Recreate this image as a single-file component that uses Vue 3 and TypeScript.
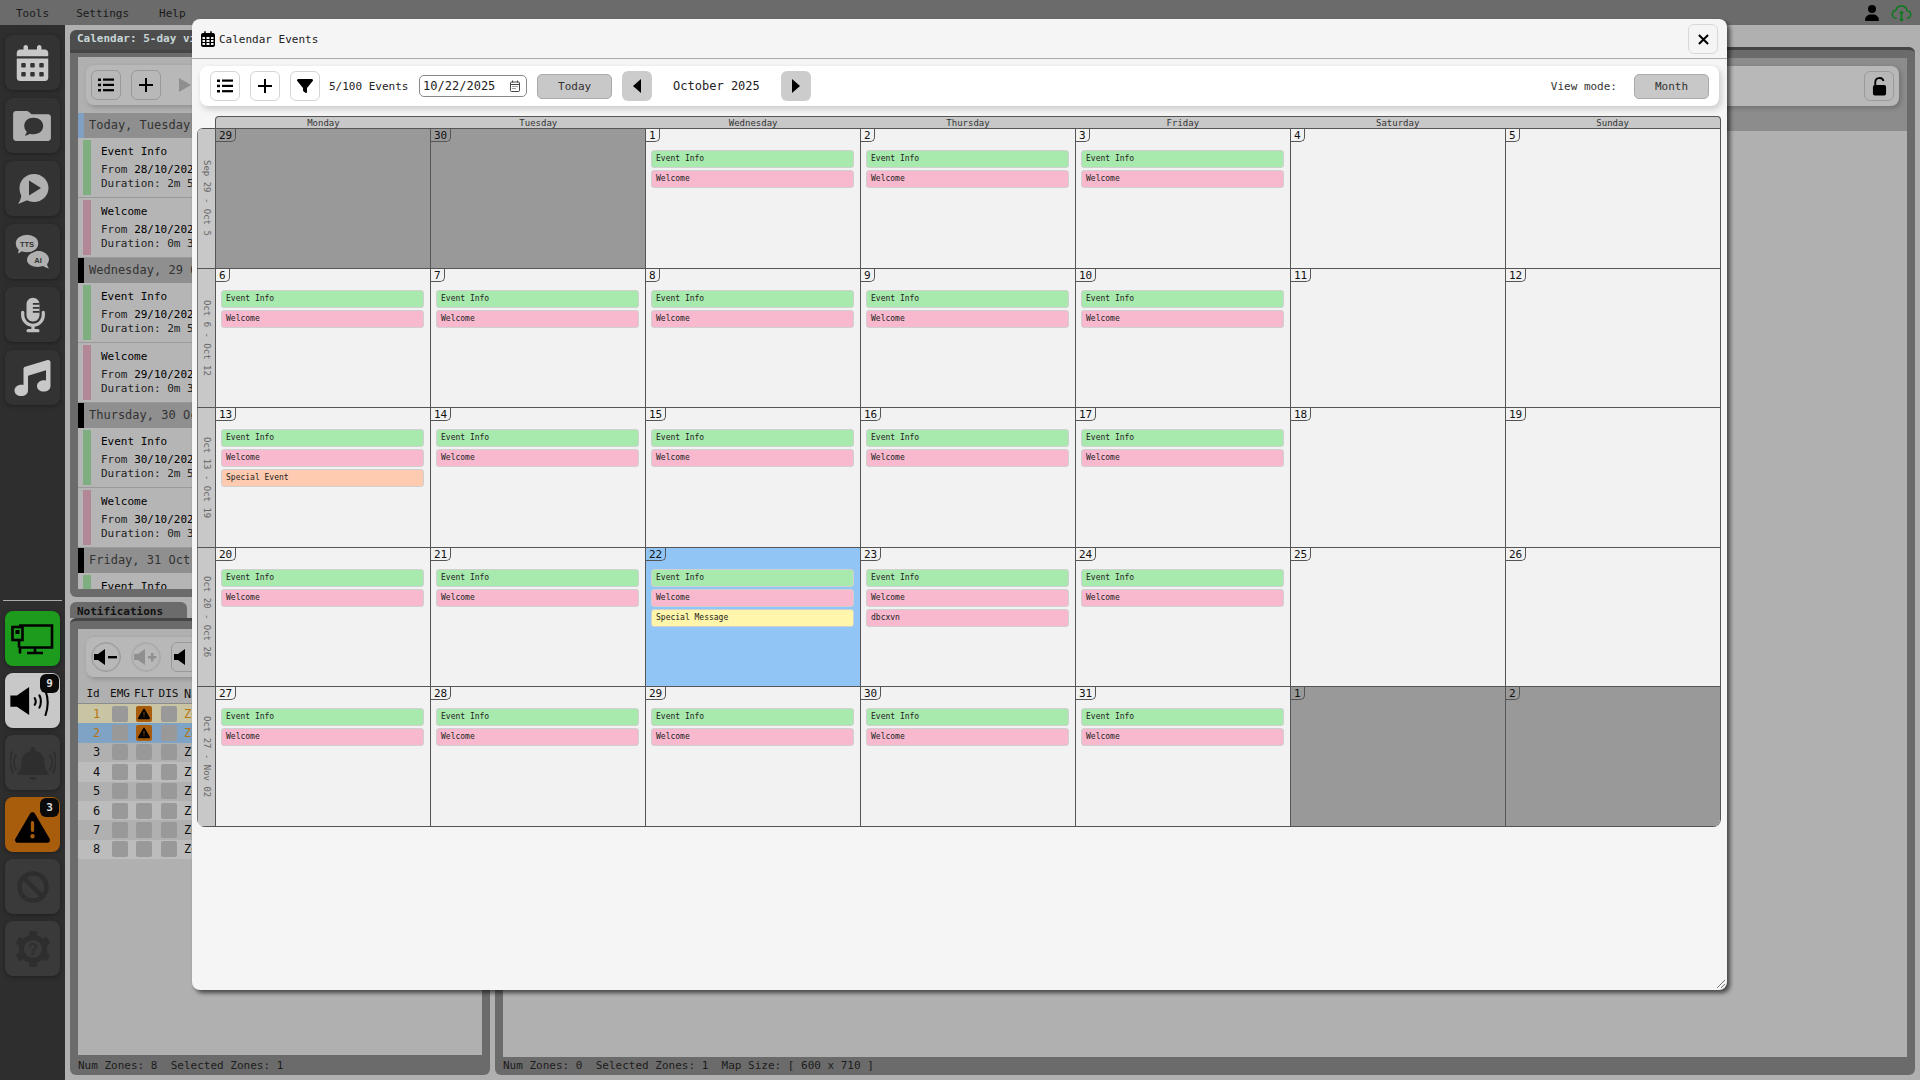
<script setup lang="ts">
type EventKind = "green" | "pink" | "yellow" | "orange";

interface CalEvent {
  label: string;
  kind: EventKind;
}

interface DayCell {
  day: number;
  muted: boolean;
  today: boolean;
  events: CalEvent[];
}

interface Week {
  label: string;
  days: DayCell[];
}

const weekdays = ["Monday", "Tuesday", "Wednesday", "Thursday", "Friday", "Saturday", "Sunday"];

const extras: Record<number, CalEvent[]> = {
  13: [{ label: "Special Event", kind: "orange" }],
  22: [{ label: "Special Message", kind: "yellow" }],
  23: [{ label: "dbcxvn", kind: "pink" }],
};

function buildDay(day: number, muted: boolean, column: number): DayCell {
  const base: CalEvent[] =
    muted || column > 4
      ? []
      : [
          { label: "Event Info", kind: "green" },
          { label: "Welcome", kind: "pink" },
        ];
  const more = muted ? [] : extras[day] ?? [];
  return { day, muted, today: !muted && day === 22, events: [...base, ...more] };
}

function buildWeek(label: string, numbers: number[]): Week {
  return {
    label,
    days: numbers.map((n, i) => buildDay(n, (label.startsWith("Sep") && n > 20) || (label.includes("Nov") && n < 3), i)),
  };
}

const weeks: Week[] = [
  buildWeek("Sep 29 - Oct 5", [29, 30, 1, 2, 3, 4, 5]),
  buildWeek("Oct 6 - Oct 12", [6, 7, 8, 9, 10, 11, 12]),
  buildWeek("Oct 13 - Oct 19", [13, 14, 15, 16, 17, 18, 19]),
  buildWeek("Oct 20 - Oct 26", [20, 21, 22, 23, 24, 25, 26]),
  buildWeek("Oct 27 - Nov 02", [27, 28, 29, 30, 31, 1, 2]),
];

// the last group runs out of the panel, only its first title shows
const agenda = [
  { title: "Today, Tuesday", strip: "#7fa0c2", date: "28/10/2025", partial: false },
  { title: "Wednesday, 29 Oct", strip: "#000", date: "29/10/2025", partial: false },
  { title: "Thursday, 30 Oct", strip: "#000", date: "30/10/2025", partial: false },
  { title: "Friday, 31 Oct", strip: "#000", date: "31/10/2025", partial: true },
];

const zones = [1, 2, 3, 4, 5, 6, 7, 8];
</script>

<template>
  <div class="app">
    <header class="menubar">
      <nav class="menu">
        <span>Tools</span>
        <span>Settings</span>
        <span class="menu-help">Help</span>
      </nav>
      <div class="menubar-right">
        <svg class="user-icon" viewBox="0 0 448 512"><path d="M224 256A128 128 0 1 0 224 0a128 128 0 1 0 0 256zm-45.7 48C79.8 304 0 383.8 0 482.3C0 498.7 13.3 512 29.7 512H418.3c16.4 0 29.7-13.3 29.7-29.7C448 383.8 368.2 304 269.7 304H178.3z"/></svg>
        <svg class="cloud-icon" viewBox="0 0 24 24" fill="none" stroke="#0b7a1c" stroke-width="1.7" stroke-linejoin="round">
          <path d="M6.5 17.5C3.5 17.5 1.5 15.4 1.5 13c0-2.3 1.7-4.1 4-4.4C6.2 5.6 8.7 3.5 11.8 3.5c3.3 0 6 2.4 6.5 5.5 2.4.2 4.2 2 4.2 4.2 0 2.4-2 4.3-4.5 4.3"/>
          <path d="M12 8.5l-3 3.3h6zM12 21.500l-3-3.300h6z" fill="#0b7a1c" stroke="none"/>
          <path d="M12 11v8" stroke-width="2"/>
        </svg>
      </div>
    </header>

    <div class="main">
      <aside class="sidebar">
        <div class="side-group">
          <button class="side-btn">
            <svg class="i-cal" viewBox="0 0 448 512"><path d="M128 0c17.7 0 32 14.3 32 32V64H288V32c0-17.7 14.3-32 32-32s32 14.3 32 32V64h48c26.5 0 48 21.5 48 48v48H0V112C0 85.5 21.5 64 48 64H96V32c0-17.7 14.3-32 32-32zM0 192H448V464c0 26.5-21.5 48-48 48H48c-26.5 0-48-21.5-48-48V192zm64 80v32c0 8.8 7.2 16 16 16h32c8.8 0 16-7.2 16-16V272c0-8.8-7.2-16-16-16H80c-8.8 0-16 7.2-16 16zm128 0v32c0 8.8 7.2 16 16 16h32c8.8 0 16-7.2 16-16V272c0-8.8-7.2-16-16-16H208c-8.8 0-16 7.2-16 16zm144-16c-8.8 0-16 7.2-16 16v32c0 8.8 7.2 16 16 16h32c8.8 0 16-7.2 16-16V272c0-8.8-7.2-16-16-16H336zM64 400v32c0 8.8 7.2 16 16 16h32c8.8 0 16-7.2 16-16V400c0-8.8-7.2-16-16-16H80c-8.8 0-16 7.2-16 16zm144-16c-8.8 0-16 7.2-16 16v32c0 8.8 7.2 16 16 16h32c8.8 0 16-7.2 16-16V400c0-8.8-7.2-16-16-16H208zm112 16v32c0 8.8 7.2 16 16 16h32c8.8 0 16-7.2 16-16V400c0-8.8-7.2-16-16-16H336c-8.8 0-16 7.2-16 16z"/></svg>
          </button>
          <button class="side-btn">
            <svg class="i-folder" viewBox="0 0 40 32">
              <path d="M3 1h11c1 0 1.7.4 2.3 1l2.7 2.5h17c1.700 0 3 1.3 3 3V29c0 1.700-1.300 3-3 3H3c-1.700 0-3-1.300-3-3V4c0-1.700 1.300-3 3-3z"/>
              <path d="M21 8c5.800 0 10 3.600 10 8.500S26.800 25 21 25c-1.300 0-2.600-.2-3.700-.6-1.400 1.100-3.200 1.900-5.300 2 1.100-1.200 1.800-2.600 2.100-3.900-1.600-1.500-2.600-3.600-2.600-6C11.500 11.600 15.200 8 21 8z" fill="#333"/>
            </svg>
          </button>
          <button class="side-btn">
            <svg class="i-bubble" viewBox="0 0 32 32">
              <path d="M17 1c8 0 14.5 6.3 14.5 14S25 29 17 29c-2.500 0-4.800-.6-6.800-1.700L1 31c1.800-2.500 3-5.500 3.300-8.500C3 20.200 2.500 17.700 2.500 15 2.500 7.300 9 1 17 1z"/>
              <path d="M12 7.500l12 7.500-12 7.500z" fill="#333"/>
            </svg>
          </button>
          <button class="side-btn">
            <svg class="i-tts" viewBox="0 0 36 36">
              <path d="M23 17c6 0 11 3.800 11 8.500 0 1.800-.8 3.500-2 4.800.3 1.500 1 3 2 4.200-2.300-.4-4.300-1.200-5.800-2.400-1.500.5-3.300.8-5.200.8-6 0-11-2.900-11-7s5-8.900 11-8.900z"/>
              <path d="M12 0c6.600 0 12 4 12 9.500S18.600 19 12 19c-1.800 0-3.500-.3-5-.8C5.500 19.400 3.500 20.200 1 20.500c1-1.200 1.700-2.700 2-4.200C1.200 14.600 0 12.200 0 9.500 0 4 5.400 0 12 0z" stroke="#333" stroke-width="1.500"/>
              <text x="12" y="12.500" text-anchor="middle" class="tts-text">TTS</text>
              <text x="23" y="28.500" text-anchor="middle" class="tts-text">AI</text>
            </svg>
          </button>
          <button class="side-btn">
            <svg class="i-mic" viewBox="0 0 384 512">
              <path d="M192 0C139 0 96 43 96 96V256c0 53 43 96 96 96s96-43 96-96V96c0-53-43-96-96-96zM64 216c0-13.3-10.7-24-24-24s-24 10.7-24 24v40c0 89.1 66.2 162.7 152 174.4V464H120c-13.300 0-24 10.700-24 24s10.700 24 24 24h72 72c13.300 0 24-10.700 24-24s-10.700-24-24-24H216V430.4c85.800-11.700 152-85.300 152-174.400V216c0-13.300-10.700-24-24-24s-24 10.700-24 24v40c0 70.700-57.300 128-128 128s-128-57.300-128-128V216z"/>
              <path d="M190 90h100M190 150h100M190 210h100" stroke="#333" stroke-width="26"/>
            </svg>
          </button>
          <button class="side-btn">
            <svg class="i-music" viewBox="0 0 512 512"><path d="M499.1 6.3c8.1 6 12.9 15.6 12.9 25.7v72V368c0 44.200-43 80-96 80s-96-35.800-96-80s43-80 96-80c11.200 0 22 1.600 32 4.600V147L192 223.800V432c0 44.200-43 80-96 80s-96-35.800-96-80s43-80 96-80c11.200 0 22 1.600 32 4.600V200 128c0-14.100 9.300-26.600 22.800-30.700l320-96c9.700-2.900 20.200-1.100 28.300 4.900z"/></svg>
          </button>
        </div>

        <div class="side-group side-bottom">
          <button class="side-btn side-green">
            <svg class="i-monitor" viewBox="0 0 44 32" fill="none" stroke="#000" stroke-width="2.600">
              <path d="M8 2.500h33v22H8"/>
              <path d="M8 18v6.500M9 24.500v6M16 30h16M24 24.500v5.500" />
              <rect x="1.500" y="4" width="10" height="13" fill="#1c9b1c"/>
              <rect x="4.500" y="7" width="4" height="4" fill="#000" stroke="none"/>
            </svg>
          </button>
          <button class="side-btn side-light">
            <svg class="i-speaker" viewBox="0 0 46 32" fill="none" stroke="#000" stroke-width="2.200" stroke-linecap="round">
              <path d="M1 10h7L21 1v30L8 22H1z" fill="#000" stroke="none"/>
              <path d="M27 13c1.200 2 1.200 5 0 7M32 10c2 3.500 2 9.500 0 13M39 7c2.500 6 2.500 16-.5 24"/>
            </svg>
            <span class="side-badge">9</span>
          </button>
          <button class="side-btn side-off">
            <svg class="i-bell" viewBox="0 0 46 34" fill="none" stroke="#2e2e2e" stroke-width="1.800" stroke-linecap="round">
              <path d="M23 1c-1.500 0-2.500 1-2.500 2.400V5C15 6.300 11.500 10.500 11.500 16c0 5-1.500 8.500-4 11-.7 1 0 2 1 2h29c1 0 1.700-1 1-2-2.500-2.500-4-6-4-11 0-5.500-3.500-9.700-9-11V3.400C25.500 2 24.500 1 23 1zM19.500 31c.4 1.700 1.800 3 3.500 3s3.100-1.300 3.500-3z" fill="#2e2e2e" stroke="none"/>
              <path d="M6 9c-3 4-3 11 0 15M2 6c-3 6-2 16 1 21M40 9c3 4 3 11 0 15M44 6c3 6 2 16-1 21"/>
            </svg>
          </button>
          <button class="side-btn side-warn">
            <svg class="i-warn" viewBox="0 0 512 512"><path d="M256 32c14.200 0 27.300 7.500 34.500 19.800l216 368c7.300 12.400 7.300 27.700 .2 40.100S486.300 480 472 480H40c-14.300 0-27.600-7.700-34.700-20.100s-7-27.800 .2-40.100l216-368C228.700 39.500 241.800 32 256 32zm0 128c-13.300 0-24 10.700-24 24V296c0 13.300 10.700 24 24 24s24-10.700 24-24V184c0-13.300-10.700-24-24-24zm32 224a32 32 0 1 0 -64 0 32 32 0 1 0 64 0z"/></svg>
            <span class="side-badge">3</span>
          </button>
          <button class="side-btn side-off">
            <svg class="i-ban" viewBox="0 0 32 32" fill="none" stroke="#2e2e2e" stroke-width="4.500">
              <circle cx="16" cy="16" r="13.500"/>
              <path d="M6.500 6.500l19 19"/>
            </svg>
          </button>
          <button class="side-btn side-off">
            <svg class="i-gear" viewBox="0 0 32 32">
              <g fill="#2e2e2e">
                <circle cx="16" cy="16" r="12.500"/>
                <rect x="12.500" y="0" width="7" height="32" rx="1.500"/>
                <rect x="12.500" y="0" width="7" height="32" rx="1.500" transform="rotate(60 16 16)"/>
                <rect x="12.500" y="0" width="7" height="32" rx="1.500" transform="rotate(120 16 16)"/>
              </g>
              <circle cx="16" cy="16" r="8" fill="#3a3a3a"/>
              <text x="16" y="21" text-anchor="middle" class="gear-text">?</text>
            </svg>
          </button>
        </div>
      </aside>

      <div class="workspace">
        <div class="left-col">
          <section class="panel panel-calendar">
            <div class="tab tab-active">Calendar: 5-day view</div>
            <div class="frame">
              <div class="frame-inner">
                <div class="tool-row">
                  <button class="tool-btn">
                    <svg class="i-16" viewBox="0 0 16 14"><rect x="0" y="0.500" width="3" height="2.500"/><rect x="0" y="5.700" width="3" height="2.500"/><rect x="0" y="11" width="3" height="2.500"/><rect x="5" y="0.500" width="11" height="2.200"/><rect x="5" y="5.800" width="11" height="2.200"/><rect x="5" y="11.100" width="11" height="2.200"/></svg>
                  </button>
                  <button class="tool-btn">
                    <svg class="i-16" viewBox="0 0 14 14"><path d="M7 0v14M0 7h14" stroke="#000" stroke-width="2"/></svg>
                  </button>
                  <svg class="i-play" viewBox="0 0 12 14"><path d="M0 0l12 7-12 7z" fill="#8f8f8f"/></svg>
                </div>
                <div class="agenda">
                  <template v-for="group in agenda" :key="group.title">
                    <div class="agenda-head">
                      <i class="agenda-strip" :style="{ background: group.strip }"></i>
                      <span>{{ group.title }}</span>
                    </div>
                    <div class="agenda-card">
                      <i class="card-strip strip-green"></i>
                      <div class="card-body">
                        <div class="card-title">Event Info</div>
                        <template v-if="!group.partial">
                          <div>From <b>{{ group.date }}</b></div>
                          <div>Duration: 2m 50s</div>
                        </template>
                      </div>
                    </div>
                    <div v-if="!group.partial" class="agenda-card">
                      <i class="card-strip strip-pink"></i>
                      <div class="card-body">
                        <div class="card-title">Welcome</div>
                        <div>From <b>{{ group.date }}</b></div>
                        <div>Duration: 0m 30s</div>
                      </div>
                    </div>
                  </template>
                </div>
              </div>
            </div>
          </section>

          <section class="panel panel-notify">
            <div class="tab">Notifications</div>
            <div class="frame">
              <div class="frame-inner">
                <div class="tool-row">
                  <button class="tool-btn tool-round">
                    <svg class="i-vol" viewBox="0 0 24 16"><path d="M0 5h4l7-5v16l-7-5H0z"/><rect x="14" y="7" width="9" height="2.400"/></svg>
                  </button>
                  <button class="tool-btn tool-round tool-dim">
                    <svg class="i-vol" viewBox="0 0 24 16" fill="#8f8f8f"><path d="M0 5h4l7-5v16l-7-5H0z"/><path d="M14 7h3V4h2.400v3h3v2.400h-3v3H17v-3h-3z"/></svg>
                  </button>
                  <button class="tool-btn">
                    <svg class="i-vol" viewBox="0 0 24 16"><path d="M0 5h4l7-5v16l-7-5H0z"/></svg>
                  </button>
                </div>
                <div class="zone-table">
                  <div class="zone-row zone-head">
                    <span>Id</span><span>EMG</span><span>FLT</span><span>DIS</span><span class="name">Name</span>
                  </div>
                  <div
                    v-for="id in zones"
                    :key="id"
                    class="zone-row"
                    :class="{ 'zone-fault': id < 3, 'zone-a': id === 1, 'zone-b': id === 2 }"
                  >
                    <span class="zone-id">{{ id }}</span>
                    <span class="sq"></span>
                    <span class="sq" :class="{ 'sq-warn': id < 3 }">
                      <svg v-if="id < 3" viewBox="0 0 512 512"><path d="M256 32c14 0 27 7 34 20l216 368c7 12 7 28 0 40s-20 20-34 20H40c-14 0-28-8-35-20s-7-28 0-40L222 52c7-13 20-20 34-20z"/><path d="M240 170h32v150h-32zM240 350h32v40h-32z" fill="#a85d0c"/></svg>
                    </span>
                    <span class="sq"></span>
                    <span class="name">Zone {{ id }}</span>
                  </div>
                </div>
              </div>
              <div class="status">Num Zones: 8&nbsp;&nbsp;Selected Zones: 1</div>
            </div>
          </section>
        </div>

        <section class="panel panel-map">
          <div class="frame">
            <div class="frame-inner">
              <div class="map-top">
                <div class="tool-row tool-row-end">
                  <button class="tool-btn">
                    <svg class="i-lock" viewBox="0 0 16 20">
                      <path d="M3.500 9V5.500a4.500 4.500 0 0 1 8.800-1.300" fill="none" stroke="#000" stroke-width="2"/>
                      <rect x="1" y="8.500" width="14" height="11" rx="2"/>
                    </svg>
                  </button>
                </div>
              </div>
            </div>
            <div class="status status-map">Num Zones: 0&nbsp;&nbsp;Selected Zones: 1&nbsp;&nbsp;Map Size: [ 600 x 710 ]</div>
          </div>
        </section>
      </div>
    </div>

    <div class="modal">
      <div class="modal-head">
        <svg class="i-title" viewBox="0 0 448 512"><path d="M128 0c13.300 0 24 10.700 24 24V64H296V24c0-13.300 10.700-24 24-24s24 10.700 24 24V64h40c35.300 0 64 28.700 64 64v16 48V448c0 35.300-28.700 64-64 64H64c-35.300 0-64-28.700-64-64V192 144 128C0 92.700 28.700 64 64 64h40V24c0-13.300 10.700-24 24-24zM48 192v64H128V192H48zm128 0v64h96V192H176zm144 0v64h80V192H320zM48 288v64H128V288H48zm128 0v64h96V288H176zm144 0v64h80V288H320zM48 384v64H128V384H48zm128 0v64h96V384H176zm144 0v64h80V384H320z"/></svg>
        <span class="modal-title">Calendar Events</span>
        <button class="close-btn">
          <svg viewBox="0 0 12 12"><path d="M1 1l10 10M11 1L1 11" stroke="#000" stroke-width="2.200"/></svg>
        </button>
      </div>

      <div class="modal-tools">
        <button class="tool-btn tool-white">
          <svg class="i-16" viewBox="0 0 16 14"><rect x="0" y="0.500" width="3" height="2.500"/><rect x="0" y="5.700" width="3" height="2.500"/><rect x="0" y="11" width="3" height="2.500"/><rect x="5" y="0.500" width="11" height="2.200"/><rect x="5" y="5.800" width="11" height="2.200"/><rect x="5" y="11.100" width="11" height="2.200"/></svg>
        </button>
        <button class="tool-btn tool-white">
          <svg class="i-16" viewBox="0 0 14 14"><path d="M7 0v14M0 7h14" stroke="#000" stroke-width="2"/></svg>
        </button>
        <button class="tool-btn tool-white">
          <svg class="i-filter" viewBox="0 0 512 512"><path d="M3.900 54.900C10.500 40.900 24.500 32 40 32H472c15.500 0 29.500 8.900 36.100 22.900s4.600 30.500-5.200 42.500L320 320.900V448c0 12.100-6.800 23.200-17.700 28.600s-23.800 4.300-33.500-3l-64-48c-8.100-6-12.800-15.500-12.800-25.600V320.900L9 97.300C-.7 85.400-2.800 68.800 3.900 54.900z"/></svg>
        </button>
        <span class="count">5/100 Events</span>
        <div class="date-input">
          <span>10/22/2025</span>
          <svg viewBox="0 0 12 12" fill="none" stroke="#444" stroke-width="1">
            <rect x="1.500" y="2" width="9" height="9.500" rx="1"/>
            <path d="M1.500 4.500h9M3.500 .5v2M8.500 .5v2" />
            <path d="M3.500 6.500h5M3.500 8.500h3" stroke-dasharray="1 1"/>
          </svg>
        </div>
        <button class="grey-btn today-btn">Today</button>
        <button class="nav-btn">
          <svg viewBox="0 0 8 14"><path d="M8 0v14L0 7z"/></svg>
        </button>
        <span class="month-label">October 2025</span>
        <button class="nav-btn">
          <svg viewBox="0 0 8 14"><path d="M0 0v14l8-7z"/></svg>
        </button>
        <span class="view-label">View mode:</span>
        <button class="grey-btn month-btn">Month</button>
      </div>

      <div class="calendar">
        <div class="cal-head">
          <span v-for="name in weekdays" :key="name">{{ name }}</span>
        </div>
        <div class="cal-body">
          <div v-for="week in weeks" :key="week.label" class="cal-row">
            <div class="week-label"><span>{{ week.label }}</span></div>
            <div
              v-for="cell in week.days"
              :key="week.label + cell.day"
              class="cell"
              :class="{ muted: cell.muted, today: cell.today }"
            >
              <span class="day-no">{{ cell.day }}</span>
              <div class="chips">
                <div v-for="ev in cell.events" :key="ev.label" class="chip" :class="ev.kind">{{ ev.label }}</div>
              </div>
            </div>
          </div>
        </div>
      </div>

      <svg class="resize-grip" viewBox="0 0 8 8" fill="none" stroke="#555" stroke-width="0.800"><path d="M0 8l8-8M4 8l4-4"/></svg>
    </div>
  </div>
</template>

<style>
html,
body {
  margin: 0;
  background: #b0b0b0;
}
</style>

<style scoped>
* {
  box-sizing: border-box;
}

button {
  font-family: inherit;
  padding: 0;
}

.app {
  position: relative;
  width: 1920px;
  height: 1080px;
  overflow: hidden;
  display: flex;
  flex-direction: column;
  background: #b0b0b0;
  font-family: "DejaVu Sans Mono", monospace;
  font-size: 11px;
  color: #111;
}

.menubar {
  height: 25px;
  flex: none;
  display: flex;
  align-items: center;
  justify-content: space-between;
  background: #6b6b6b;
  padding: 1px 8px 0 16px;
}

.menu {
  display: flex;
  gap: 27px;
  color: #1a1a1a;
}

.menu-help {
  margin-left: 3px;
}

.menubar-right {
  display: flex;
  align-items: center;
  gap: 12px;
}

.user-icon {
  width: 14px;
  height: 16px;
}

.cloud-icon {
  width: 21px;
  height: 21px;
}

.main {
  flex: 1;
  min-height: 0;
  display: flex;
}

.sidebar {
  width: 65px;
  flex: none;
  background: #2e2e2e;
  padding: 10px 5px;
  display: flex;
  flex-direction: column;
  justify-content: space-between;
}

.side-group {
  display: flex;
  flex-direction: column;
  gap: 8px;
}

.side-bottom {
  gap: 7px;
  border-top: 1px solid #aaa;
  padding: 10px 2px 0;
  margin: 0 -2px 94px;
}

.side-btn {
  position: relative;
  width: 55px;
  height: 55px;
  border: none;
  border-radius: 8px;
  background: #333;
  box-shadow: 0 1px 4px rgba(0, 0, 0, 0.35);
  display: flex;
  align-items: center;
  justify-content: center;
  fill: #b0b0b0;
}

.side-green {
  background: #1c9b1c;
}

.side-light {
  background: #c8c8c8;
  fill: #000;
}

.side-off {
  background: #3a3a3a;
}

.side-warn {
  background: #a85d0c;
  fill: #000;
}

.side-badge {
  position: absolute;
  top: 1px;
  right: 1px;
  width: 19px;
  height: 19px;
  border-radius: 6px;
  background: #0a0a0a;
  color: #ddd;
  font-size: 11px;
  font-weight: bold;
  line-height: 19px;
  text-align: center;
}

.i-cal {
  width: 33px;
  height: 36px;
  fill: #c8c8c8;
}

.i-folder {
  width: 39px;
  height: 31px;
}

.i-bubble {
  width: 32px;
  height: 32px;
}

.i-tts {
  width: 36px;
  height: 36px;
}

.tts-text {
  font-family: "Liberation Sans", sans-serif;
  font-size: 7.500px;
  font-weight: bold;
  fill: #333;
}

.i-mic {
  width: 26px;
  height: 36px;
  fill: #c0c0c0;
}

.i-music {
  width: 37px;
  height: 36px;
  fill: #c8c8c8;
}

.i-monitor {
  width: 44px;
  height: 32px;
}

.i-speaker {
  width: 44px;
  height: 30px;
  margin: 0 4px 0 0;
}

.i-bell {
  width: 46px;
  height: 34px;
}

.i-warn {
  width: 35px;
  height: 35px;
  margin-top: 5px;
}

.i-ban {
  width: 32px;
  height: 32px;
}

.i-gear {
  width: 36px;
  height: 36px;
}

.gear-text {
  font-family: "Liberation Sans", sans-serif;
  font-size: 15px;
  font-weight: bold;
  fill: #2e2e2e;
}

.workspace {
  flex: 1;
  min-width: 0;
  display: flex;
  gap: 5px;
  padding: 5px;
}

.left-col {
  width: 420px;
  flex: none;
  display: flex;
  flex-direction: column;
  gap: 5px;
}

.panel {
  display: flex;
  flex-direction: column;
  min-height: 0;
}

.panel-calendar {
  height: 567px;
}

.panel-notify {
  flex: 1;
}

.panel-map {
  flex: 1;
  min-width: 0;
  margin-top: 17px;
}

.tab {
  align-self: flex-start;
  height: 16px;
  width: 117px;
  padding: 0 0 0 7px;
  line-height: 20px;
  font-size: 11px;
  font-weight: bold;
  background: #6b6b6b;
  border-radius: 6px 6px 0 0;
  color: #111;
  white-space: nowrap;
  overflow: hidden;
}

.tab-active {
  height: 20px;
  width: 200px;
  line-height: 18px;
  background: #4d4d4d;
  color: #c7d5d6;
}

.frame {
  flex: 1;
  min-height: 0;
  display: flex;
  flex-direction: column;
  background: #6b6b6b;
  border-top: 3px solid #454545;
  border-radius: 6px;
  padding: 8px 8px 0;
}

.panel-calendar .frame {
  padding: 4px 8px 8px;
  border-radius: 0 6px 6px 6px;
}

.frame-inner {
  flex: 1;
  min-height: 0;
  overflow: hidden;
  background: #b0b0b0;
}

.tool-row {
  height: 40px;
  margin: 8px;
  padding: 0 5px;
  display: flex;
  align-items: center;
  gap: 10px;
  background: #b8b8b8;
  border-radius: 8px;
  box-shadow: 2px 2px 5px rgba(0, 0, 0, 0.2);
}

.tool-btn {
  width: 30px;
  height: 30px;
  flex: none;
  border: 1px solid #9a9a9a;
  border-radius: 6px;
  background: transparent;
  display: flex;
  align-items: center;
  justify-content: center;
}

.tool-round {
  border-radius: 50%;
  box-shadow: inset 0 0 0 1px #aaa;
}

.tool-dim {
  border-color: #aaa;
}

.tool-white {
  border-color: #d5d5d5;
  background: #fff;
}

.i-16 {
  width: 16px;
  height: 14px;
}

.i-play {
  width: 12px;
  height: 14px;
  margin-left: 8px;
}

.i-vol {
  width: 24px;
  height: 16px;
}

.i-lock {
  width: 15px;
  height: 19px;
}

.i-filter {
  width: 16px;
  height: 16px;
}

.agenda-head {
  position: relative;
  height: 25px;
  padding-left: 11px;
  background: #8f8f8f;
  color: #333;
  font-size: 12px;
  line-height: 25px;
  white-space: nowrap;
}

.agenda-strip {
  position: absolute;
  left: 0;
  top: 0;
  bottom: 0;
  width: 6px;
}

.agenda-card {
  height: 60px;
  display: flex;
  gap: 10px;
  padding: 2px 0 2px 5px;
  border-bottom: 1px solid #999;
  background: #b5b5b5;
  line-height: 14px;
  white-space: nowrap;
}

.card-strip {
  width: 8px;
  flex: none;
}

.strip-green {
  background: #7fae80;
}

.strip-pink {
  background: #b28798;
}

.card-body {
  color: #222;
}

.card-body b {
  font-weight: normal;
  color: #000;
}

.card-title {
  margin: 5px 0 4px;
  color: #000;
}

.zone-table {
  margin-top: 7px;
}

.zone-row {
  display: grid;
  grid-template-columns: 30px 24px 24px 25px 1fr;
  height: 19.400px;
  align-items: center;
  justify-items: center;
  background: #b0b0b0;
}

.zone-row:nth-child(odd) {
  background: #bcbcbc;
}

.zone-head,
.zone-head:nth-child(odd) {
  height: 19px;
  background: transparent;
  border-bottom: 1px solid #8c8c8c;
  line-height: 18px;
  color: #111;
}

.zone-id {
  padding-left: 7px;
  font-size: 12px;
}

.name {
  justify-self: start;
  margin-left: 3px;
  font-size: 12px;
  white-space: nowrap;
}

.zone-fault {
  color: #b8750f;
}

.zone-a,
.zone-a:nth-child(odd) {
  background: #c9c4a4;
}

.zone-b,
.zone-b:nth-child(odd) {
  background: #7fa3c4;
}

.sq {
  width: 16px;
  height: 16px;
  border-radius: 2px;
  background: #999;
  display: flex;
  align-items: center;
  justify-content: center;
}

.sq-warn {
  background: #a85d0c;
}

.sq-warn svg {
  width: 12px;
  height: 12px;
}

.status {
  height: 20px;
  flex: none;
  line-height: 21px;
  color: #1c1c1c;
  font-size: 11px;
  white-space: nowrap;
}

.status-map {
  height: 18px;
  line-height: 18px;
}

.map-top {
  background: #8c8c8c;
  height: 73px;
  overflow: hidden;
}

.tool-row-end {
  justify-content: flex-end;
}

.modal {
  position: absolute;
  left: 192px;
  top: 19px;
  width: 1535px;
  height: 971px;
  border-radius: 8px;
  background: #f5f5f5;
  box-shadow: 3px 3px 4px rgba(0, 0, 0, 0.6);
  display: flex;
  flex-direction: column;
}

.modal-head {
  height: 40px;
  flex: none;
  display: flex;
  align-items: center;
  gap: 4px;
  padding: 1px 9px 0 9px;
  border-bottom: 1px solid #aaa;
}

.i-title {
  width: 14px;
  height: 16px;
}

.modal-title {
  flex: 1;
  color: #222;
}

.close-btn {
  width: 30px;
  height: 30px;
  border: 1px solid #d8d8d8;
  border-radius: 6px;
  background: #f5f5f5;
  display: flex;
  align-items: center;
  justify-content: center;
}

.close-btn svg {
  width: 11px;
  height: 11px;
}

.modal-tools {
  height: 40px;
  flex: none;
  margin: 7px 8px 0;
  padding: 0 10px;
  display: flex;
  align-items: center;
  gap: 10px;
  background: #fff;
  border-radius: 8px;
  box-shadow: 2px 3px 6px rgba(0, 0, 0, 0.18);
}

.count {
  margin: 0 0.600px 0 -1px;
  color: #222;
}

.date-input {
  width: 108px;
  height: 22px;
  border: 1px solid #888;
  border-radius: 5px;
  background: #fff;
  display: flex;
  align-items: center;
  justify-content: space-between;
  padding: 0 5px 0 3px;
  font-size: 12px;
  color: #222;
}

.date-input svg {
  width: 12px;
  height: 12px;
}

.grey-btn {
  height: 25px;
  border: 1px solid #aaa;
  border-radius: 5px;
  background: #c8c8c8;
  color: #333;
  font-size: 11px;
  line-height: 21px;
}

.today-btn {
  width: 75px;
}

.nav-btn {
  width: 30px;
  height: 30px;
  border: none;
  border-radius: 6px;
  background: #ccc;
  display: flex;
  align-items: center;
  justify-content: center;
}

.nav-btn svg {
  width: 8px;
  height: 14px;
}

.month-label {
  width: 109px;
  padding-left: 11px;
  font-size: 12px;
  white-space: nowrap;
  color: #222;
}

.view-label {
  margin-left: auto;
  margin-right: 7px;
  color: #333;
}

.month-btn {
  width: 75px;
}

.calendar {
  margin: 10px 6px 0 5px;
}

.cal-head {
  margin-left: 18px;
  height: 12px;
  display: grid;
  grid-template-columns: repeat(7, 1fr);
  background: #c8c8c8;
  border: 1px solid #555;
  border-bottom: none;
  border-radius: 4px 4px 0 0;
  font-size: 9px;
  line-height: 12px;
  text-align: center;
  color: #333;
}

.cal-body {
  border-top: 1px solid #555;
  border-right: 1px solid #555;
  border-radius: 6px 0 8px 8px;
  overflow: hidden;
}

.cal-row {
  display: grid;
  grid-template-columns: 18px repeat(7, 1fr);
  height: 139.500px;
  border-bottom: 1px solid #555;
}

.week-label {
  background: #c8c8c8;
  border-left: 1px solid #777;
  color: #666;
  font-size: 9px;
  display: flex;
  align-items: center;
  justify-content: center;
}

.week-label span {
  writing-mode: vertical-rl;
  white-space: nowrap;
}

.cell {
  min-width: 0;
  border-left: 1px solid #555;
  background: #f2f2f2;
  display: flex;
  flex-direction: column;
}

.cell.muted {
  background: #999;
}

.cell.today {
  background: #91c5f5;
}

.day-no {
  align-self: flex-start;
  height: 13px;
  padding: 0 3px;
  border-right: 1px solid #555;
  border-bottom: 1px solid #555;
  border-radius: 0 0 5px 0;
  font-size: 11px;
  line-height: 13px;
  color: #111;
}

.chips {
  margin: 8px 6px 0 5px;
  display: flex;
  flex-direction: column;
  gap: 2px;
}

.chip {
  height: 18px;
  padding-left: 4px;
  border: 1px solid #d0d0d0;
  border-radius: 3px;
  font-size: 8px;
  line-height: 16px;
  color: #222;
}

.chip.green {
  background: #a8e9ad;
}

.chip.pink {
  background: #f8b8ce;
}

.chip.yellow {
  background: #fff6ab;
}

.chip.orange {
  background: #ffcbb0;
}

.resize-grip {
  position: absolute;
  right: 2px;
  bottom: 2px;
  width: 8px;
  height: 8px;
}
</style>
